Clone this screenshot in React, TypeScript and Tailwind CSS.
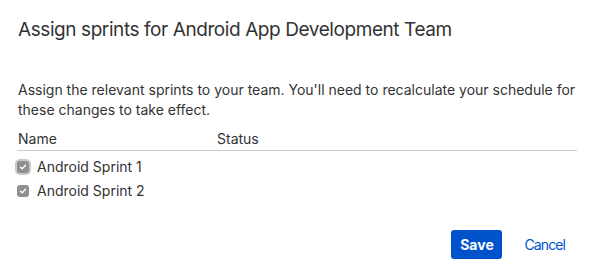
import React from "react";

function Check({ focused }: { focused?: boolean }) {
  return (
    <span
      className={
        "ml-[-2px] flex items-center justify-center w-[16px] h-[16px] rounded-[5px] " +
        (focused ? "bg-[#c9c9c9]" : "")
      }
    >
      <span className="flex items-center justify-center w-[12px] h-[12px] rounded-[3px] bg-[#8e8e93]">
        <svg width="8" height="8" viewBox="0 0 8 8">
          <path d="M1.5 4.2 L3.2 5.8 L6.5 2.2" fill="none" stroke="white" strokeWidth="1.4" strokeLinecap="round" strokeLinejoin="round" />
        </svg>
      </span>
    </span>
  );
}

export default function App() {
  return (
    <div className="w-[593px] h-[269px] bg-white pl-[17px] pr-[16px] font-['Inter',sans-serif] text-[#333] flex flex-col">
      <h1 className="pt-[17px] text-[19px] leading-[26px] font-normal pl-[1px] tracking-[-0.42px]">
        Assign sprints for Android App Development Team
      </h1>
      <p className="mt-[37px] text-[14px] leading-[20px] pl-[1px] tracking-[0px]">
        Assign the relevant sprints to your team. You'll need to recalculate your schedule for these changes to take effect.
      </p>
      <div className="mt-[9px] flex text-[14px] leading-[20px] pl-[1px] pb-[1px] border-b border-[#cccccc]">
        <span className="w-[199px]">Name</span>
        <span>Status</span>
      </div>
      <div className="mt-[6px] flex items-center gap-[6px] text-[14px] leading-[20px]">
        <Check focused />
        <span>Android Sprint 1</span>
      </div>
      <div className="mt-[4px] flex items-center gap-[6px] text-[14px] leading-[20px]">
        <Check />
        <span>Android Sprint 2</span>
      </div>
      <div className="mt-[29px] flex items-center justify-end gap-[22px] pr-[12px]">
        <button className="w-[51px] h-[29px] rounded-[3px] bg-[#0052cc] text-white font-bold text-[14px]">
          Save
        </button>
        <button className="text-[#0052cc] text-[14px] tracking-[-0.9px]">Cancel</button>
      </div>
    </div>
  );
}
